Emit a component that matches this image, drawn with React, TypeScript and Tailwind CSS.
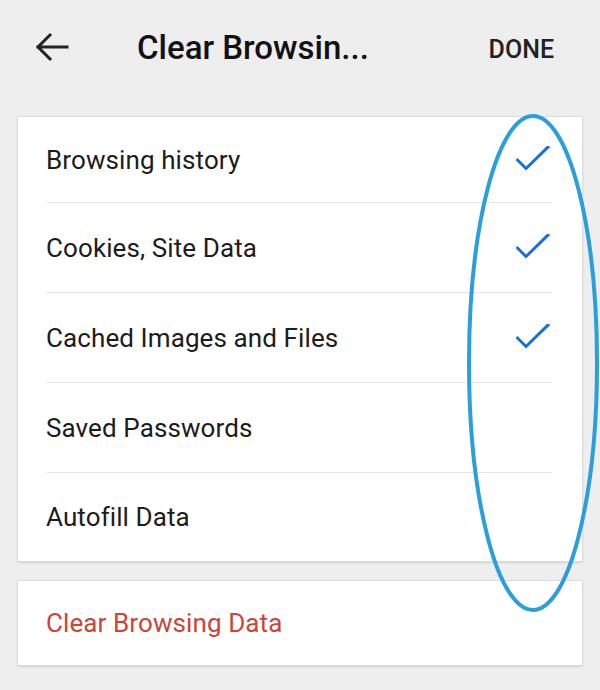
import { type JSX } from "react";

const ROWS: { label: string; checked: boolean; height: string }[] = [
  { label: "Browsing history", checked: true, height: "h-[86px]" },
  { label: "Cookies, Site Data", checked: true, height: "h-[90px]" },
  { label: "Cached Images and Files", checked: true, height: "h-[90px]" },
  { label: "Saved Passwords", checked: false, height: "h-[90px]" },
  { label: "Autofill Data", checked: false, height: "h-[88px]" },
];

function BackArrow(): JSX.Element {
  return (
    <svg width="34" height="30" viewBox="0 0 34 30" fill="none" aria-hidden>
      <path
        d="M3 15 H32 M15 3 L3 15 L15 27"
        stroke="#222222"
        strokeWidth="3"
        strokeLinecap="square"
        strokeLinejoin="miter"
      />
    </svg>
  );
}

function Check(): JSX.Element {
  return (
    <svg width="34" height="28" viewBox="0 0 34 28" fill="none" aria-hidden>
      <path
        d="M1.5 14 L10 22.5 L32 1"
        stroke="#1c6fd5"
        strokeWidth="3"
        strokeLinecap="square"
      />
    </svg>
  );
}

export default function App(): JSX.Element {
  return (
    <div className="relative w-[600px] h-[690px] overflow-hidden bg-[#eeeeee] font-['Roboto',sans-serif]">
      {/* Toolbar */}
      <div className="flex items-center h-[94px]">
        <div className="ml-[35px]">
          <BackArrow />
        </div>
        <span className="ml-[68px] text-[33px] font-medium text-[#111111] leading-none">
          Clear Browsin...
        </span>
        <span className="ml-auto mr-[46px] mt-[4px] text-[25px] font-medium text-[#222222] leading-none">
          DONE
        </span>
      </div>

      {/* Options card */}
      <div className="mt-[22px] mx-[17px] bg-white border border-[#dcdcdc] rounded-[2px] shadow-[0_1px_2px_rgba(0,0,0,0.12)]">
        {ROWS.map((row, i) => (
          <div key={row.label} className="pl-[28px] pr-[30px]">
            <div
              className={
                i < ROWS.length - 1
                  ? `flex items-center justify-between border-b border-[#e6e6e6] ${row.height}`
                  : `flex items-center justify-between ${row.height}`
              }
            >
              <span className="text-[26px] tracking-[0.1px] text-[#1c1c1c] leading-none">
                {row.label}
              </span>
              {row.checked && (
                <div className="mr-[2px]">
                  <Check />
                </div>
              )}
            </div>
          </div>
        ))}
      </div>

      {/* Action card */}
      <div className="mt-[18px] mx-[17px] h-[86px] flex items-center pl-[28px] bg-white border border-[#dcdcdc] rounded-[2px] shadow-[0_1px_2px_rgba(0,0,0,0.12)]">
        <span className="text-[26px] tracking-[0.1px] text-[#c9453b] leading-none">
          Clear Browsing Data
        </span>
      </div>

      {/* Annotation ellipse */}
      <svg
        className="absolute left-0 top-0 pointer-events-none"
        width="600"
        height="690"
        viewBox="0 0 600 690"
        fill="none"
        aria-hidden
      >
        <ellipse cx="533" cy="363" rx="64" ry="247" stroke="#2a9fdc" strokeWidth="4" />
      </svg>
    </div>
  );
}
